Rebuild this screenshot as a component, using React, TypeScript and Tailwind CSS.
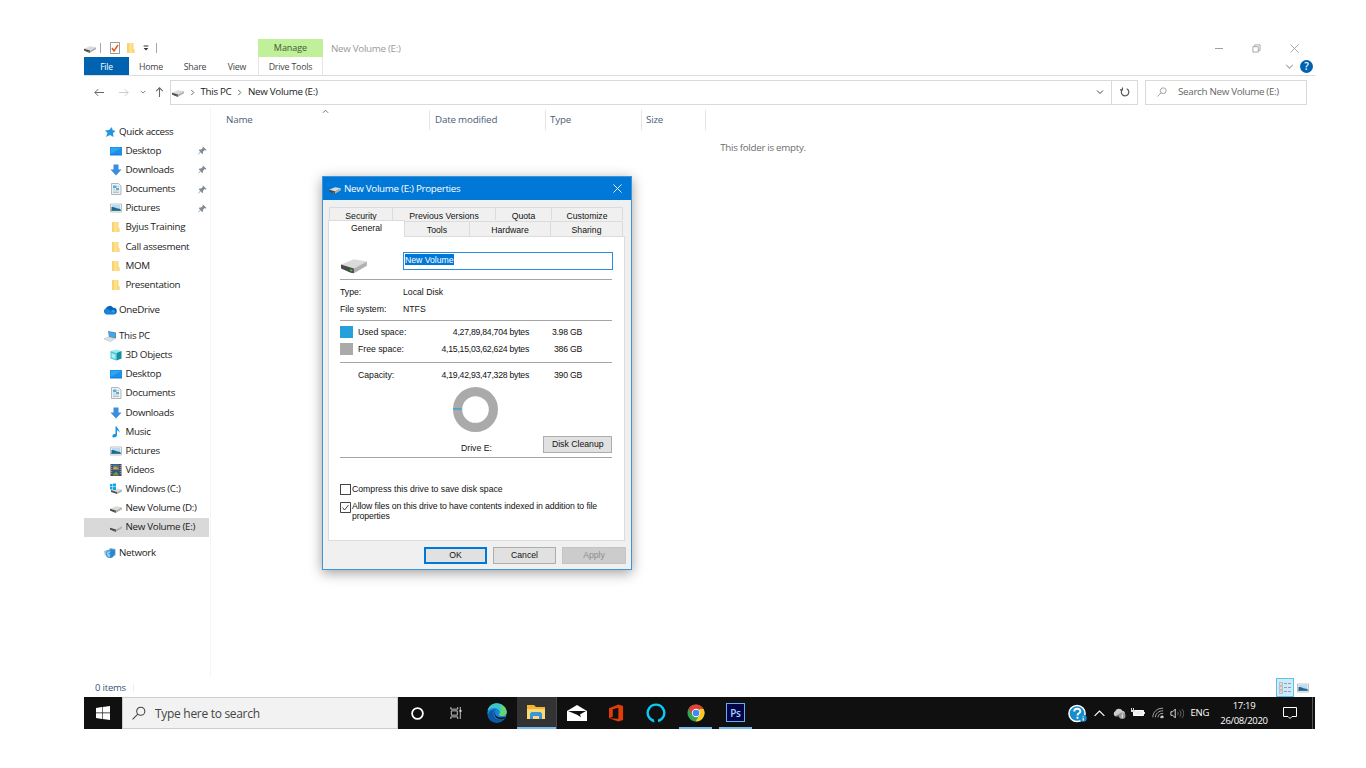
import React from "react";

type IconProps = { className?: string };

function DriveIcon({ className = "w-3 h-3" }: IconProps) {
  return (
    <svg viewBox="0 0 24 24" className={className}>
      <path d="M0 13.500 12 8.500 24 10.500 12 17z" fill="#dadada" />
      <path d="M0 13.500 12 17v4.500L9 21 0 17z" fill="#4a4a4a" />
      <path d="M12 17 24 10.500v4L12 21.500z" fill="#b0b0b0" />
      <path d="m8.500 17.800 2 .5v1.500l-2-.5z" fill="#35d04a" />
    </svg>
  );
}

function WindowsDriveIcon({ className = "w-3 h-3" }: IconProps) {
  return (
    <svg viewBox="0 0 24 24" className={className}>
      <path d="M2 14 12 11 24 13 14 18z" fill="#dedede" />
      <path d="M2 14 14 18v4L2 18z" fill="#555" />
      <path d="M14 18 24 13v4l-10 5z" fill="#b0b0b0" />
      <path d="M0 2h5v5H0zM6 1h6v6H6zM0 8h5v5H0zM6 8h6v6H6z" fill="#12a5ea" />
    </svg>
  );
}

function FolderIcon({ className = "w-3 h-3" }: IconProps) {
  return (
    <svg viewBox="0 0 24 24" className={className}>
      <path d="M4 2h12v12h3v8H4z" fill="#ffe08a" />
      <path d="M4 2h4v20H4z" fill="#f7d373" />
      <path d="M14 2h3v11l2 2v7h-5z" fill="#f9d980" />
    </svg>
  );
}

function StarIcon({ className = "w-3 h-3" }: IconProps) {
  return (
    <svg viewBox="0 0 24 24" className={className}>
      <path d="m16 2 1 6 6 2-5 4 1 8-7-4-8 4 3-8-5-5 8-1z" fill="#2196e3" />
    </svg>
  );
}

function DesktopIcon({ className = "w-3 h-3" }: IconProps) {
  return (
    <svg viewBox="0 0 24 24" className={className}>
      <path d="M0 4h24v17H0z" fill="#1683d8" />
      <path d="M1 5h22v13H1z" fill="#2ca5f5" />
      <path d="M1 18 23 6v12z" fill="#1b90e6" />
    </svg>
  );
}

function DownloadIcon({ className = "w-3 h-3" }: IconProps) {
  return (
    <svg viewBox="0 0 24 24" className={className}>
      <path d="M7 1h10v10h6L12 23 1 11h6z" fill="#3b8ede" />
    </svg>
  );
}

function DocumentIcon({ className = "w-3 h-3" }: IconProps) {
  return (
    <svg viewBox="0 0 24 24" className={className}>
      <path d="M3 1h14l5 5v17H3z" fill="#eef1f3" stroke="#9aa2a8" strokeWidth="1.500" />
      <path d="M6 5h7v5H6zM12 10h6v4h-6z" fill="#54aee0" />
      <path d="M6 12h4M6 16h12M6 19h12M15 7h3" stroke="#a5b4bf" strokeWidth="1.500" />
    </svg>
  );
}

function PictureIcon({ className = "w-3 h-3" }: IconProps) {
  return (
    <svg viewBox="0 0 24 24" className={className}>
      <path d="M1 4h22v16H1z" fill="#fff" stroke="#a8adb2" strokeWidth="1.500" />
      <path d="M3 6h18v12H3z" fill="#b5dcf6" />
      <path d="M3 10c5-1 8 3 18 4v4H3z" fill="#23618f" />
      <path d="M3 16c7-2 11-1 18 0v2H3z" fill="#2e7d8b" />
    </svg>
  );
}

function CloudIcon({ className = "w-3 h-3" }: IconProps) {
  return (
    <svg viewBox="0 0 26 18" className={className}>
      <path d="M6 17a6 6 0 0 1-1-11 8 8 0 0 1 14-1 6 6 0 0 1 1 12z" fill="#0a62b8" />
      <path d="M6 17 19 8a5 5 0 0 1 1 9z" fill="#2b9ff0" />
      <path d="M6 17a6 6 0 0 1-1-10c5-1 8 3 13 6l7 1c-1 2-3 3-5 3z" fill="#1684da" />
    </svg>
  );
}

function ComputerIcon({ className = "w-3 h-3" }: IconProps) {
  return (
    <svg viewBox="0 0 24 24" className={className}>
      <path d="m8 2 16 3v12L10 14z" fill="#6b7f8f" />
      <path d="m9.500 3.500 13 3v9l-12-3z" fill="#39aaf2" />
      <path d="m0 18 8-4 13 4-8 5z" fill="#dbe0e4" stroke="#aab4bb" />
    </svg>
  );
}

function CubeIcon({ className = "w-3 h-3" }: IconProps) {
  return (
    <svg viewBox="0 0 24 24" className={className}>
      <path d="m1 4 12-3 10 3-10 4z" fill="#9beaf0" />
      <path d="M1 4l12 4v15L1 19z" fill="#42c8d6" />
      <path d="M13 8 23 4v15l-10 4z" fill="#138fa3" />
      <path d="m3 8 8 3v9l-8-3z" fill="#a9eef2" />
    </svg>
  );
}

function MusicIcon({ className = "w-3 h-3" }: IconProps) {
  return (
    <svg viewBox="0 0 24 24" className={className}>
      <path d="M11 1h3c0 5 6 6 5 13-1-4-3-5-5-5v9c0 3-3 5-6 5s-4-2-3-4c1-3 4-3 6-3z" fill="#1593e6" />
    </svg>
  );
}

function VideoIcon({ className = "w-3 h-3" }: IconProps) {
  return (
    <svg viewBox="0 0 24 24" className={className}>
      <path d="M1 0h22v24H1z" fill="#444b52" />
      <path d="M6 1h12v10H6z" fill="#317dc0" />
      <path d="M6 12h12v11H6z" fill="#265987" />
      <path d="m6 8 6-4 6 7H6z" fill="#caa73c" />
      <path d="m6 20 7-5 5 8H6z" fill="#77914a" />
      <path d="M12 3h5v3h-5z" fill="#b9492f" />
      <path d="M3.500 2v20M20.500 2v20" stroke="#a9b0b6" strokeWidth="2" strokeDasharray="2 2" />
    </svg>
  );
}

function NetworkIcon({ className = "w-3 h-3" }: IconProps) {
  return (
    <svg viewBox="0 0 24 24" className={className}>
      <path d="m11 2 12 2v13l-8 2-5-6z" fill="#6fb5de" />
      <path d="m13 4 9 2v9l-8 1z" fill="#2f86c4" />
      <path d="m0 8 9-3 1 10-8 2z" fill="#8cc6e8" />
      <circle cx="12" cy="14" r="8" fill="#2d86c8" />
      <path d="m7 9 6-1-1 4-3 1 4 3-2 5-4-3-2-5z" fill="#8fcdf0" />
    </svg>
  );
}

function PinIcon({ className = "w-2.5 h-2.5" }: IconProps) {
  return (
    <svg viewBox="0 0 20 20" className={className}>
      <path d="m11 1 8 8-2 1-2-1-4 4v4l-2 1-3-4-5 5-.8-.8L5 13 2 10l1-2h4l4-4-1-2z" fill="#7f8c98" />
    </svg>
  );
}

function SearchIcon({ className = "w-3 h-3" }: IconProps) {
  return (
    <svg viewBox="0 0 24 24" className={className} fill="none" stroke="currentColor" strokeWidth="1.800">
      <circle cx="15" cy="9" r="7" />
      <path d="M10 14 1 23" />
    </svg>
  );
}

function Chevron({ className = "w-2 h-2" }: IconProps) {
  return (
    <svg viewBox="0 0 16 16" className={className} fill="none" stroke="currentColor" strokeWidth="2">
      <path d="m2 5 6 6 6-6" />
    </svg>
  );
}

type NavItem = {
  label: string;
  Icon: React.FC<IconProps>;
  top?: boolean;
  pinned?: boolean;
  selected?: boolean;
};

const quickAccess: NavItem[] = [
  { label: "Quick access", Icon: StarIcon, top: true },
  { label: "Desktop", Icon: DesktopIcon, pinned: true },
  { label: "Downloads", Icon: DownloadIcon, pinned: true },
  { label: "Documents", Icon: DocumentIcon, pinned: true },
  { label: "Pictures", Icon: PictureIcon, pinned: true },
  { label: "Byjus Training", Icon: FolderIcon },
  { label: "Call assesment", Icon: FolderIcon },
  { label: "MOM", Icon: FolderIcon },
  { label: "Presentation", Icon: FolderIcon },
];

const thisPc: NavItem[] = [
  { label: "This PC", Icon: ComputerIcon, top: true },
  { label: "3D Objects", Icon: CubeIcon },
  { label: "Desktop", Icon: DesktopIcon },
  { label: "Documents", Icon: DocumentIcon },
  { label: "Downloads", Icon: DownloadIcon },
  { label: "Music", Icon: MusicIcon },
  { label: "Pictures", Icon: PictureIcon },
  { label: "Videos", Icon: VideoIcon },
  { label: "Windows (C:)", Icon: WindowsDriveIcon },
  { label: "New Volume (D:)", Icon: DriveIcon },
  { label: "New Volume (E:)", Icon: DriveIcon, selected: true },
];

const groups: NavItem[][] = [
  quickAccess,
  [{ label: "OneDrive", Icon: CloudIcon, top: true }],
  thisPc,
  [{ label: "Network", Icon: NetworkIcon, top: true }],
];

function NavRow({ item }: { item: NavItem }) {
  const { Icon } = item;
  return (
    <li
      className={`flex items-center h-[19.17px] pr-[2px] whitespace-nowrap ${
        item.top ? "pl-[19px]" : "pl-[26px]"
      } ${item.selected ? "bg-[#d9d9d9]" : ""}`}
    >
      <Icon className={item.top ? "w-[14px] h-3 shrink-0" : "w-3 h-3 shrink-0"} />
      <span className={item.top ? "ml-[2px]" : "ml-[3.5px]"}>{item.label}</span>
      {item.pinned && <PinIcon className="w-[9px] h-[9px] ml-auto" />}
    </li>
  );
}

function TitleBar() {
  return (
    <div className="flex h-[18px] items-center text-[#9a9a9a]">
      <DriveIcon className="w-3 h-3" />
      <span className="ml-1 w-px h-[10px] bg-[#a5a5a5]" />
      <svg viewBox="0 0 20 24" className="ml-[9px] w-[10px] h-3">
        <path d="M1 1h18v22H1z" fill="#fff" stroke="#777" strokeWidth="1.500" />
        <path d="m4 12 4 6 8-12" fill="none" stroke="#e2571f" strokeWidth="3" />
      </svg>
      <FolderIcon className="ml-[5px] w-3 h-3" />
      <svg viewBox="0 0 10 10" className="ml-[6px] w-[6px] h-[6px]">
        <path d="M1 1h8v1.500H1zM1 5h8L5 9z" fill="#333" />
      </svg>
      <span className="ml-[7px] w-px h-[10px] bg-[#a5a5a5]" />
      <span className="ml-[101px] w-[65px] h-[18px] bg-[#c1f09a] flex items-center justify-center text-[9px] tracking-[-0.05px] text-[#3f5a35]">
        Manage
      </span>
      <span className="ml-2 mt-[2px]">New Volume (E:)</span>
      <div className="ml-auto mr-4 flex items-center text-[#a0a0a0]">
        <span className="w-2 h-px bg-[#a0a0a0]" />
        <svg viewBox="0 0 10 10" className="ml-[29px] w-[9px] h-[9px]" fill="none" stroke="currentColor">
          <path d="M1 3h6v6H1zM3 3V1h6v6H7" />
        </svg>
        <svg viewBox="0 0 10 10" className="ml-[29px] w-[9px] h-[9px]" fill="none" stroke="currentColor">
          <path d="m.5.5 9 9M9.500.5l-9 9" />
        </svg>
      </div>
    </div>
  );
}

function RibbonTabs() {
  return (
    <div className="flex h-[19px] items-center border-b border-[#dcdddf] text-[8.800px] tracking-[-0.18px] text-[#444]">
      <span className="w-[45px] h-[18px] pt-[1px] bg-[#0063b1] text-white flex items-center justify-center text-[8.500px]">
        File
      </span>
      <span className="w-11 pt-[2px] text-center">Home</span>
      <span className="w-11 pt-[2px] text-center">Share</span>
      <span className="w-10 pt-[2px] text-center">View</span>
      <span className="ml-[1px] w-[65px] h-[18px] pt-[1px] border-x border-[#e6e6e6] flex items-center justify-center">
        Drive Tools
      </span>
      <Chevron className="ml-auto w-[9px] h-[9px] text-[#aaa]" />
      <span className="ml-[6px] mr-[2px] w-[13px] h-[13px] rounded-full bg-[#0063b1] text-white text-[10px] font-semibold flex items-center justify-center">
        ?
      </span>
    </div>
  );
}

function AddressBar() {
  return (
    <div className="flex h-8 items-center pl-[10px] pr-2 text-[#555]">
      <svg viewBox="0 0 12 10" className="w-[10px] h-[9px]" fill="none" stroke="#666" strokeWidth="1.200">
        <path d="M12 5H1m4-4L1 5l4 4" />
      </svg>
      <svg viewBox="0 0 12 10" className="ml-[15px] w-[10px] h-[9px]" fill="none" stroke="#ccc" strokeWidth="1.200">
        <path d="M0 5h11M7 1l4 4-4 4" />
      </svg>
      <Chevron className="ml-[11px] w-[6px] h-[6px]" />
      <svg viewBox="0 0 10 12" className="ml-[9px] w-[9px] h-[10px]" fill="none" stroke="#666" strokeWidth="1.300">
        <path d="M5 12V1M1 5l4-4 4 4" />
      </svg>
      <div className="ml-[6px] w-[968px] h-[25px] border border-[#d9d9d9] flex items-center text-[#222]">
        <DriveIcon className="ml-[1px] w-3 h-3" />
        <Chevron className="ml-[5px] w-[7px] h-[7px] -rotate-90 text-[#555]" />
        <span className="ml-[4.500px]">This PC</span>
        <Chevron className="ml-[4.500px] w-[7px] h-[7px] -rotate-90 text-[#555]" />
        <span className="ml-[5px]">New Volume (E:)</span>
        <Chevron className="ml-auto mr-[7px] w-[8px] h-[8px] text-[#444]" />
        <span className="w-[26px] h-full border-l border-[#d9d9d9] flex items-center justify-center">
          <svg viewBox="0 0 12 12" className="w-[10px] h-[10px]" fill="none" stroke="#555" strokeWidth="1.400">
            <path d="M8 2a4.500 4.500 0 1 1-5 .8M3 .5V3.500h-3" />
          </svg>
        </span>
      </div>
      <div className="ml-auto w-[162px] h-[25px] border border-[#d9d9d9] flex items-center text-[#666]">
        <SearchIcon className="ml-[11px] w-[10px] h-[10px] text-[#888]" />
        <span className="ml-[11px]">Search New Volume (E:)</span>
      </div>
    </div>
  );
}

function FileList() {
  return (
    <div className="flex-1">
      <div className="flex h-[22px] mt-[1px] items-center text-[#4c607a] leading-5 tracking-[-0.2px]">
        <span className="w-[219px] h-5 pl-[15px] border-r border-[#e5e5e5] flex justify-between">
          Name
          <Chevron className="mr-[100px] w-[7px] h-[7px] rotate-180 text-[#666] -mt-[2px]" />
        </span>
        <span className="w-[116px] h-5 pl-[5px] border-r border-[#e5e5e5]">Date modified</span>
        <span className="w-24 h-5 pl-1 border-r border-[#e5e5e5]">Type</span>
        <span className="w-16 h-5 pl-1 border-r border-[#e5e5e5]">Size</span>
      </div>
      <p className="mt-[9px] text-center text-[#6d6d6d] leading-4">This folder is empty.</p>
    </div>
  );
}

function StatusBar() {
  return (
    <div className="flex h-[19px] items-center pl-[11px] pr-[6px] text-[#3c5477] text-[9.500px] tracking-[-0.2px]">
      <span>0 items</span>
      <span className="ml-[7px] w-px h-2 bg-[#eee]" />
      <span className="ml-auto w-[18px] h-[19px] border border-[#5cc0ea] bg-[#cbebfa] flex items-center justify-center">
        <svg viewBox="0 0 12 12" className="w-3 h-3">
          <path d="M.5 .5h3v3h-3zM.5 4.500h3v3h-3zM.5 8.500h3v3h-3z" fill="#fff" stroke="#999" strokeWidth=".6" />
          <path d="M1.500 1.500h1v1h-1zM1.500 5.500h1v1h-1zM1.500 9.500h1v1h-1z" fill="#b75532" />
          <path d="M5 1.500h3m1 0h3M5 5.500h3m1 0h3M5 9.500h3m1 0h3" stroke="#8b969f" strokeWidth=".9" />
        </svg>
      </span>
      <PictureIcon className="ml-[3px] w-3 h-3" />
    </div>
  );
}

function TaskButton({ children, active, open }: { children: React.ReactNode; active?: boolean; open?: boolean }) {
  return (
    <div
      className={`w-[39.7px] h-8 flex flex-col items-center ${
        active ? "bg-[#333] border-r border-[#484848]" : ""
      }`}
    >
      <div className="flex-1 flex items-center justify-center">{children}</div>
      {(active || open) && <div className={`h-[2px] bg-[#76b9ed] ${active ? "w-full" : "w-[33px]"}`} />}
    </div>
  );
}

function Taskbar() {
  return (
    <div className="flex h-8 bg-[#101010] text-white">
      <div className="w-[38px] flex items-center justify-center">
        <svg viewBox="0 0 14 14" className="w-[14px] h-[14px]" fill="#fff">
          <path d="M0 2l6-1v5.600H0zM6.600.9 14 0v6.600H6.600zM0 7.300h6V13l-6-1zM6.600 7.300H14V14l-7.400-1z" />
        </svg>
      </div>
      <div className="w-[276px] bg-[#f2f2f2] border border-[#ccc] flex items-center text-[#444] text-[12px] tracking-[-0.3px]">
        <SearchIcon className="ml-[9px] w-[14px] h-[14px]" />
        <span className="ml-[9px] mt-[2px]">Type here to search</span>
      </div>
      <TaskButton>
        <svg viewBox="0 0 14 14" className="w-[13px] h-[13px]">
          <circle cx="7" cy="7" r="5.800" fill="none" stroke="#fff" strokeWidth="1.900" />
        </svg>
      </TaskButton>
      <TaskButton>
        <svg viewBox="0 0 14 14" className="w-[14px] h-[12px] mr-[3px]" fill="none" stroke="#ddd">
          <path d="M1 0v2.500h8V0M1 14v-2.500h8V14M1.500 4.500h7v5h-7zM12 0v14" />
          <path d="M11 3.500h2.500v2H11z" fill="#ddd" stroke="none" />
        </svg>
      </TaskButton>
      <TaskButton>
        <svg viewBox="0 0 20 20" className="w-5 h-5">
          <circle cx="10" cy="10" r="9.700" fill="#1784d8" />
          <path d="M.5 8C2 1 9-1 14 1.200c6 3 7 9 4 11-2 1.500-6 1-6-1 1-1 1-2 .5-3C11 4 4 4 .5 8z" fill="#3bc6c8" />
          <path d="M14 1.200c6 3 7 9 4 11-2 1.500-6 1-6-1 3-2 2-7 2-10z" fill="#65d66c" />
          <path d="M7 8c-2 5 2 10 10 8-5 5-13 4-15 0C-1 10 4 6 9 6.500 8 7 7 7.500 7 8z" fill="#0d57a5" />
          <path d="M8.500 8c-2 4 2 8 9 6 1 0 1 .5.5 1-5 3-10 0-10.500-4 0-1.500.5-2.500 1-3z" fill="#101010" />
        </svg>
      </TaskButton>
      <TaskButton active>
        <svg viewBox="0 0 18 16" className="w-[18px] h-4">
          <path d="M0 1h7l2 2h9v12H0z" fill="#f4b52e" />
          <path d="M0 5h18v10H0z" fill="#fcda72" />
          <path d="M3 15V9.500L4.500 8h9L15 9.500V15h-3v-3H6v3z" fill="#3996dc" />
        </svg>
      </TaskButton>
      <TaskButton>
        <svg viewBox="0 0 20 16" className="w-5 h-4">
          <path d="M0 6 10 0l10 6v10H0z" fill="#fff" />
          <path d="M1 6h18l-6 3.500 1 2.800-4-2.600z" fill="#111" />
        </svg>
      </TaskButton>
      <TaskButton>
        <svg viewBox="0 0 16 18" className="w-[15px] h-[18px]">
          <path d="M0 4 10 0l5 1.500v15L10 18 0 14.500l10 .7V3.500L4 5v8l-4 1.500z" fill="#e33c09" />
        </svg>
      </TaskButton>
      <TaskButton>
        <svg viewBox="0 0 20 20" className="w-5 h-5">
          <path d="M8 18A8.300 8.300 0 1 1 12 18" fill="none" stroke="#09c9f6" strokeWidth="2.400" />
          <path d="M4 15c2 1.200 4.500 2 4.700 4.500l-2-.7z" fill="#09c9f6" />
        </svg>
      </TaskButton>
      <TaskButton open>
        <svg viewBox="0 0 20 20" className="w-[18px] h-[18px] mt-[2px]">
          <circle cx="10" cy="10" r="9.500" fill="#31a552" />
          <path d="M1.800 5.200A9.500 9.500 0 0 1 18.300 5.500H10L5.900 12z" fill="#e34133" />
          <path d="M18.300 5.500A9.500 9.500 0 0 1 9.500 19.500L14 12l-.4-6.500z" fill="#fcca24" />
          <circle cx="10" cy="10" r="4.600" fill="#fff" />
          <circle cx="10" cy="10" r="3.700" fill="#4688ef" />
        </svg>
      </TaskButton>
      <TaskButton open>
        <span className="mt-[1px] w-[19px] h-[19px] border border-[#66aef4] bg-[#02054c] text-[#a5d4ff] text-[10px] leading-none font-semibold flex items-center justify-center">
          Ps
        </span>
      </TaskButton>
      <div className="ml-auto flex items-center text-[9.500px]">
        <svg viewBox="0 0 20 20" className="w-[19px] h-[19px]">
          <circle cx="9.500" cy="10" r="8.500" fill="#168dcc" stroke="#fff" strokeWidth="1.600" />
          <path d="M6.500 8c0-4 6.500-4 6.500-.5 0 2.500-3 2-3 4.500M10 13.500v2" fill="none" stroke="#fff" strokeWidth="2" />
          <circle cx="16" cy="15" r="3.700" fill="#168dcc" />
          <path d="M16 12.500v1M16 14.500v3" stroke="#fff" strokeWidth="1.200" />
        </svg>
        <Chevron className="ml-[6px] w-[13px] h-[13px] rotate-180 stroke-[1.400]" />
        <svg viewBox="0 0 26 20" className="ml-[6px] w-[14px] h-[11px]">
          <path d="M6 15a5 5 0 0 1 0-9c2-6 11-6 13-1 5 0 7 6 4 10z" fill="#ccc" />
          <path d="m6 15 12-7v7z" fill="#777" />
          <circle cx="19" cy="14" r="6" fill="#999" />
          <path d="M19 10v2M19 13v5" stroke="#eee" strokeWidth="2" />
        </svg>
        <svg viewBox="0 0 14 10" className="ml-[5px] w-[14px] h-[10px]">
          <path d="M2.500 2.500h10v5h-10z" fill="#eee" stroke="#fff" />
          <path d="M13 4h1v2h-1zM0 2h4v2H0zM0 0h1v2H0zM2 0h1v2H2z" fill="#ddd" />
        </svg>
        <svg viewBox="0 0 14 14" className="ml-[7px] w-[12px] h-[12px]" fill="none" stroke="#bbb">
          <path d="M1 12C1 6 6 1 13 1.500M4 12c0-4 4-8 9-7.500M7 12c0-2 2-5 6-4.500" />
          <path d="M10 12c0-1 1-2 3-1.500v2h-3z" fill="#fff" />
        </svg>
        <svg viewBox="0 0 16 12" className="ml-[6px] w-[14px] h-[11px]" fill="none" stroke="#eee">
          <path d="M1 4h2l3-3v10L3 8H1z" />
          <path d="M8.500 4c1 1 1 3 0 4M11 2.500c2 2 2 5 0 7M13.500 1c3 3 3 7 0 10" stroke="#777" />
        </svg>
        <span className="ml-[7px]">ENG</span>
        <div className="ml-[9px] w-[52px] text-center leading-[15px]">
          <div>17:19</div>
          <div>26/08/2020</div>
        </div>
        <svg viewBox="0 0 14 14" className="ml-[13px] w-[14px] h-[14px]" fill="none" stroke="#fff">
          <path d="M.5 1.500h13v9H9l-2 2-2-2H.5z" />
        </svg>
        <span className="ml-[15px] mr-[2px] w-px h-8 bg-[#555]" />
      </div>
    </div>
  );
}

function UsageRow({ color, label, bytes, size }: { color?: string; label: string; bytes: string; size: string }) {
  return (
    <div className="flex h-[17px] items-center">
      <span className={`w-[13px] h-3 ${color ?? ""}`} />
      <span className="ml-[5px] w-[60px]">{label}</span>
      <span className="w-[111px] text-right tracking-[-0.25px]">{bytes}</span>
      <span className="w-[53px] text-right tracking-[-0.25px]">{size}</span>
    </div>
  );
}

function PropertiesDialog() {
  return (
    <div className="absolute left-[238px] top-[137px] w-[310px] h-[394px] border border-[#3f94d8] bg-[#f0f0f0] shadow-[0_3px_12px_rgba(0,0,0,0.38)] font-['Liberation_Sans',Arial,sans-serif] text-[8.700px] tracking-normal text-[#111]">
      <div className="flex h-[23px] items-center bg-[#0078d7] text-white text-[9.800px] tracking-[-0.3px] font-['Open_Sans','Noto_Sans',sans-serif]">
        <DriveIcon className="ml-[6px] w-3 h-3" />
        <span className="ml-[3px]">New Volume (E:) Properties</span>
        <svg viewBox="0 0 10 10" className="ml-auto mr-[9px] w-[9px] h-[9px]" fill="none" stroke="#fff">
          <path d="m.5.5 9 9M9.500.5l-9 9" />
        </svg>
      </div>
      <div className="mt-[7px] ml-[6px] w-[294px] flex h-[13px] border-t border-x border-[#dcdcdc] leading-4 text-center">
        <span className="w-[63px] border-r border-[#dcdcdc]">Security</span>
        <span className="w-[103px] border-r border-[#dcdcdc]">Previous Versions</span>
        <span className="w-[56px] border-r border-[#dcdcdc]">Quota</span>
        <span className="flex-1">Customize</span>
      </div>
      <div className="ml-[5px] w-[295px] flex items-end h-4 text-center">
        <span className="w-[77px] h-[17px] -mb-px bg-white border-t border-x border-[#dcdcdc] leading-[15px] z-10">General</span>
        <span className="w-[65px] h-[15px] border-t border-r border-[#dcdcdc] leading-4">Tools</span>
        <span className="w-[81px] h-[15px] border-t border-r border-[#dcdcdc] leading-4">Hardware</span>
        <span className="flex-1 h-[15px] border-t border-r border-[#dcdcdc] leading-4">Sharing</span>
      </div>
      <div className="ml-[5px] w-[297px] h-[305px] bg-white border border-[#dcdcdc] pl-[11px] pr-[11px] pt-[15px]">
        <div className="flex items-start">
          <DriveIcon className="-mt-[3px] ml-[1px] w-[26px] h-[28px]" />
          <div className="ml-[36px] w-[211px] h-[18px] border border-[#2b8bdc] pl-[1px] pt-[1px]">
            <span className="block w-fit h-[11px] leading-[12px] bg-[#0078d7] text-white">New Volume</span>
          </div>
        </div>
        <div className="mt-[2px] w-[272px] border-t border-[#a5a5a5] pt-[4px]">
          <div className="flex h-4 items-center"><span className="w-[63px]">Type:</span>Local Disk</div>
          <div className="flex h-[17px] items-center"><span className="w-[63px]">File system:</span>NTFS</div>
        </div>
        <div className="mt-[3px] w-[272px] border-t border-[#a5a5a5] pt-[2px]">
          <UsageRow color="bg-[#26a0da]" label="Used space:" bytes="4,27,89,84,704 bytes" size="3.98 GB" />
          <UsageRow color="bg-[#aaaaaa]" label="Free space:" bytes="4,15,15,03,62,624 bytes" size="386 GB" />
        </div>
        <div className="mt-[5px] w-[272px] h-[96px] border-t border-b border-[#a5a5a5] pt-[3px]">
          <UsageRow label="Capacity:" bytes="4,19,42,93,47,328 bytes" size="390 GB" />
          <svg viewBox="0 0 44 44" className="ml-[113px] mt-[4px] w-[45px] h-[45px]">
            <circle cx="22" cy="22" r="17.500" fill="none" stroke="#aaa" strokeWidth="9" />
            <path d="M0 21.500h8.500" stroke="#26a0da" strokeWidth="1.200" />
          </svg>
          <div className="flex items-center -mt-[1px] h-[30px]">
            <span className="ml-[121px] mt-[3px] w-[83px] whitespace-nowrap">Drive E:</span>
            <button className="-mt-[4px] w-[69px] h-[17px] bg-[#e1e1e1] border border-[#adadad] whitespace-nowrap leading-none">
              Disk Cleanup
            </button>
          </div>
        </div>
        <div className="mt-[26px] flex items-center">
          <span className="w-[11px] h-[11px] border border-[#444] bg-white" />
          <span className="ml-[1px] leading-[11px]">Compress this drive to save disk space</span>
        </div>
        <div className="mt-[6px] flex items-start whitespace-nowrap">
          <svg viewBox="0 0 11 11" className="mt-[1px] w-[11px] h-[11px]" fill="none" stroke="#444">
            <path d="M.5.500h10v10H.5zM2.500 5.500 4.500 8l4-5" />
          </svg>
          <span className="ml-[1px] leading-[10px] tracking-[-0.1px]">
            Allow files on this drive to have contents indexed in addition to file
            <br />
            properties
          </span>
        </div>
      </div>
      <div className="mt-[6px] mr-[5px] flex justify-end gap-[6px]">
        <button className="w-[63px] h-[17px] bg-[#e1e1e1] border-2 border-[#0078d7] leading-none">OK</button>
        <button className="w-[63px] h-[17px] bg-[#e1e1e1] border border-[#adadad] leading-none">Cancel</button>
        <button className="w-[64px] h-[17px] bg-[#cccccc] border border-[#c4c4c4] text-[#8c8c8c] leading-none">Apply</button>
      </div>
    </div>
  );
}

export default function App() {
  return (
    <div className="w-[1366px] h-[768px] overflow-hidden bg-white pl-[84px] pt-[39px]">
      <div className="relative w-[1231px] h-[690px] flex flex-col bg-white font-['Open_Sans','Noto_Sans',sans-serif] text-[9.800px] tracking-[-0.31px] leading-4 text-[#222]">
        <TitleBar />
        <RibbonTabs />
        <AddressBar />
        <div className="flex flex-1 min-h-0">
          <nav className="w-[127px] pt-[14px] pr-[1px] border-r border-[#f5f5f5]">
            {groups.map((items, i) => (
              <ul key={i} className="mb-[6.400px]">
                {items.map((item) => (
                  <NavRow key={item.label} item={item} />
                ))}
              </ul>
            ))}
          </nav>
          <FileList />
        </div>
        <StatusBar />
        <Taskbar />
        <PropertiesDialog />
      </div>
    </div>
  );
}
